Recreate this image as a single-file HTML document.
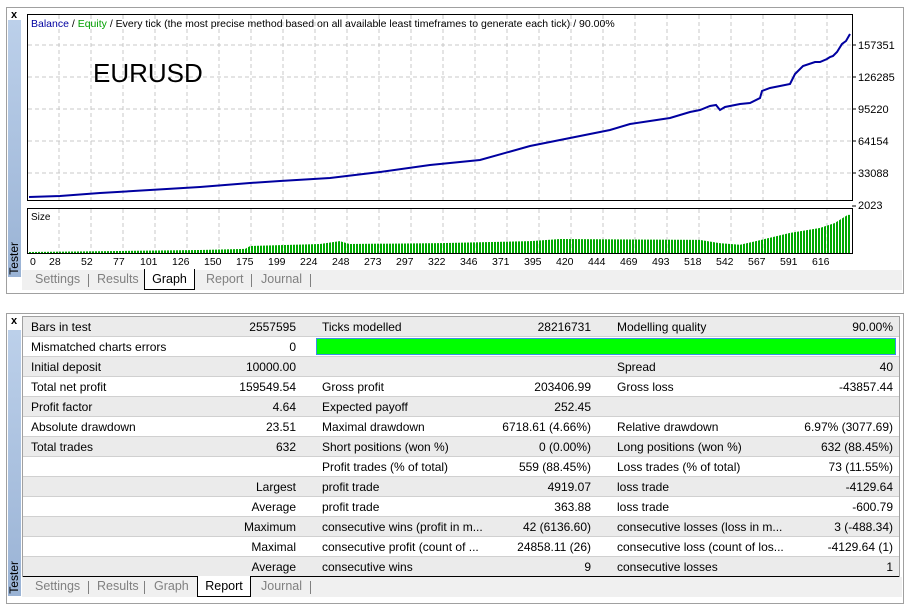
<!DOCTYPE html>
<html><head><meta charset="utf-8"><style>
*{margin:0;padding:0;box-sizing:border-box}
body{width:907px;height:610px;background:#fff;position:relative;overflow:hidden;font-family:"Liberation Sans",sans-serif;font-size:12px;color:#000}
.abs{position:absolute}
.panel{position:absolute;border:1px solid #a0a0a0;background:#f0f0f0}
.side{position:absolute;width:13px;background:linear-gradient(#bcd0ea,#9ab3d5)}
.side span{position:absolute;bottom:2px;left:-1px;writing-mode:vertical-rl;transform:rotate(180deg);font-size:12px;color:#000}
.x{position:absolute;font-size:11px;font-weight:bold}
.tabs{position:absolute;height:20px;font-size:12.5px;color:#808080}
.tabs span{position:absolute;top:2px}
.tabs i{position:absolute;top:4px;width:1px;height:13px;background:#808080}
.act{position:absolute;top:-1px;height:21px;background:#fff;border:1px solid #000;border-top:none;color:#000;text-align:center;padding-top:3px}
.row{position:absolute;left:23px;width:876px;height:20px;border-bottom:1px solid #d0d0d0}
.row span{position:absolute;top:3px;white-space:nowrap}
.r{text-align:right}
.ax{position:absolute;font-size:11px}
</style></head><body>
<div class="panel" style="left:6px;top:7px;width:898px;height:287px;background:#fff"></div>
<div class="abs" style="left:7px;top:8px;width:896px;height:285px;background:#fff"></div>
<div class="x" style="left:11px;top:9px">x</div>
<div class="side" style="left:8px;top:20px;height:257px"><span>Tester</span></div>
<svg class="abs" style="left:0;top:0" width="907" height="300">
<g stroke="#c8c8c8" stroke-dasharray="4,3" stroke-width="1">
<path d="M59 15V200M91 15V200M123 15V200M155 15V200M187 15V200M219 15V200M251 15V200M283 15V200M315 15V200M347 15V200M379 15V200M411 15V200M443 15V200M475 15V200M507 15V200M539 15V200M571 15V200M603 15V200M635 15V200M667 15V200M699 15V200M731 15V200M763 15V200M795 15V200M827 15V200"/>
<path d="M59 209V253M91 209V253M123 209V253M155 209V253M187 209V253M219 209V253M251 209V253M283 209V253M315 209V253M347 209V253M379 209V253M411 209V253M443 209V253M475 209V253M507 209V253M539 209V253M571 209V253M603 209V253M635 209V253M667 209V253M699 209V253M731 209V253M763 209V253M795 209V253M827 209V253"/>
<path d="M28 45H852M28 77H852M28 109H852M28 141H852M28 173H852"/>
</g>
<rect x="27.5" y="14.5" width="825" height="186" fill="none" stroke="#000"/>
<rect x="27.5" y="208.5" width="825" height="45" fill="none" stroke="#000"/>
<polyline fill="none" stroke="#0000a0" stroke-width="2" points="29,197 60,196 100,193 150,190 200,187 250,183 280,181 330,178 380,172 430,165 480,160 530,146 580,136 610,130 630,124 650,121 670,118 690,112 700,110 710,106 716,105 720,110 725,107 740,104 750,103 760,98 762,91 770,88 780,86 790,84 795,74 803,66 815,62 820,62 827,59 830,57 833,56 837,52 842,44 846,41 850,34"/>
<g stroke="#000"><path d="M852 45h4M852 77h4M852 109h4M852 141h4M852 173h4M852 206h4"/></g>
</svg>
<div class="abs" style="left:29px;top:212px;width:822px;height:41px;background:repeating-linear-gradient(90deg,#00a800 0 2px,transparent 2px 3px);clip-path:polygon(0 100%,0 97.5%,11% 95%,20.8% 92.7%,26.3% 90%,26.9% 83%,35.4% 78%,37.8% 71%,39% 78%,50% 76%,61% 71%,64.6% 66%,81.6% 68%,84% 76%,86.5% 80%,89.5% 66%,92.6% 51%,96.2% 39%,98% 27%,99.6% 7%,100% 7%,100% 100%)"></div>
<div class="abs" style="left:31px;top:212px;font-size:10px">Size</div>
<div class="abs" style="left:31px;top:18px;font-size:10.5px;white-space:nowrap"><span style="color:#0000a0">Balance</span> / <span style="color:#00a000">Equity</span> / Every tick (the most precise method based on all available least timeframes to generate each tick) / 90.00%</div>
<div class="abs" style="left:93px;top:58px;font-size:26px">EURUSD</div>
<div class="ax" style="left:858px;top:40px">157351</div>
<div class="ax" style="left:858px;top:72px">126285</div>
<div class="ax" style="left:858px;top:104px">95220</div>
<div class="ax" style="left:858px;top:136px">64154</div>
<div class="ax" style="left:858px;top:168px">33088</div>
<div class="ax" style="left:858px;top:200px">2023</div>
<div class="abs" style="left:0;top:256px;font-size:10.5px">
<span class="abs" style="left:30px">0</span><span class="abs" style="left:49px">28</span><span class="abs" style="left:81px">52</span><span class="abs" style="left:113px">77</span><span class="abs" style="left:140px">101</span><span class="abs" style="left:172px">126</span><span class="abs" style="left:204px">150</span><span class="abs" style="left:236px">175</span><span class="abs" style="left:268px">199</span><span class="abs" style="left:300px">224</span><span class="abs" style="left:332px">248</span><span class="abs" style="left:364px">273</span><span class="abs" style="left:396px">297</span><span class="abs" style="left:428px">322</span><span class="abs" style="left:460px">346</span><span class="abs" style="left:492px">371</span><span class="abs" style="left:524px">395</span><span class="abs" style="left:556px">420</span><span class="abs" style="left:588px">444</span><span class="abs" style="left:620px">469</span><span class="abs" style="left:652px">493</span><span class="abs" style="left:684px">518</span><span class="abs" style="left:716px">542</span><span class="abs" style="left:748px">567</span><span class="abs" style="left:780px">591</span><span class="abs" style="left:812px">616</span>
</div>
<div class="tabs" style="left:22px;top:270px;width:880px;background:#f0f0f0">
<span style="left:13px">Settings</span><i style="left:66px"></i><span style="left:75px">Results</span>
<div class="act" style="left:122px;width:51px">Graph</div>
<span style="left:184px">Report</span><i style="left:229px"></i><span style="left:239px">Journal</span><i style="left:288px"></i>
</div>
<div class="panel" style="left:6px;top:313px;width:898px;height:291px;background:#fff"></div>
<div class="x" style="left:11px;top:315px">x</div>
<div class="side" style="left:8px;top:330px;height:266px"><span>Tester</span></div>
<div class="abs" style="left:22px;top:316px;width:878px;height:262px;border:1px solid #a0a0a0;border-bottom:1px solid #000;background:#fff"></div>
<div class="row" style="top:317px;background:#ebebeb"><span style="left:8px">Bars in test</span><span class="r" style="right:603px">2557595</span><span style="left:299px">Ticks modelled</span><span class="r" style="right:308px">28216731</span><span style="left:594px">Modelling quality</span><span class="r" style="right:6px">90.00%</span></div>
<div class="row" style="top:337px;background:#fff"><span style="left:8px">Mismatched charts errors</span><span class="r" style="right:603px">0</span><div class="abs" style="left:293px;top:1px;width:580px;height:17px;background:#00ff00;border:1px solid #3a8ee6"></div></div>
<div class="row" style="top:357px;background:#ebebeb"><span style="left:8px">Initial deposit</span><span class="r" style="right:603px">10000.00</span><span style="left:594px">Spread</span><span class="r" style="right:6px">40</span></div>
<div class="row" style="top:377px;background:#fff"><span style="left:8px">Total net profit</span><span class="r" style="right:603px">159549.54</span><span style="left:299px">Gross profit</span><span class="r" style="right:308px">203406.99</span><span style="left:594px">Gross loss</span><span class="r" style="right:6px">-43857.44</span></div>
<div class="row" style="top:397px;background:#ebebeb"><span style="left:8px">Profit factor</span><span class="r" style="right:603px">4.64</span><span style="left:299px">Expected payoff</span><span class="r" style="right:308px">252.45</span></div>
<div class="row" style="top:417px;background:#fff"><span style="left:8px">Absolute drawdown</span><span class="r" style="right:603px">23.51</span><span style="left:299px">Maximal drawdown</span><span class="r" style="right:308px">6718.61 (4.66%)</span><span style="left:594px">Relative drawdown</span><span class="r" style="right:6px">6.97% (3077.69)</span></div>
<div class="row" style="top:437px;background:#ebebeb"><span style="left:8px">Total trades</span><span class="r" style="right:603px">632</span><span style="left:299px">Short positions (won %)</span><span class="r" style="right:308px">0 (0.00%)</span><span style="left:594px">Long positions (won %)</span><span class="r" style="right:6px">632 (88.45%)</span></div>
<div class="row" style="top:457px;background:#fff"><span style="left:299px">Profit trades (% of total)</span><span class="r" style="right:308px">559 (88.45%)</span><span style="left:594px">Loss trades (% of total)</span><span class="r" style="right:6px">73 (11.55%)</span></div>
<div class="row" style="top:477px;background:#ebebeb"><span class="r" style="right:603px">Largest</span><span style="left:299px">profit trade</span><span class="r" style="right:308px">4919.07</span><span style="left:594px">loss trade</span><span class="r" style="right:6px">-4129.64</span></div>
<div class="row" style="top:497px;background:#fff"><span class="r" style="right:603px">Average</span><span style="left:299px">profit trade</span><span class="r" style="right:308px">363.88</span><span style="left:594px">loss trade</span><span class="r" style="right:6px">-600.79</span></div>
<div class="row" style="top:517px;background:#ebebeb"><span class="r" style="right:603px">Maximum</span><span style="left:299px">consecutive wins (profit in m...</span><span class="r" style="right:308px">42 (6136.60)</span><span style="left:594px">consecutive losses (loss in m...</span><span class="r" style="right:6px">3 (-488.34)</span></div>
<div class="row" style="top:537px;background:#fff"><span class="r" style="right:603px">Maximal</span><span style="left:299px">consecutive profit (count of ...</span><span class="r" style="right:308px">24858.11 (26)</span><span style="left:594px">consecutive loss (count of los...</span><span class="r" style="right:6px">-4129.64 (1)</span></div>
<div class="row" style="top:557px;background:#ebebeb;border-bottom:1px solid #000"><span class="r" style="right:603px">Average</span><span style="left:299px">consecutive wins</span><span class="r" style="right:308px">9</span><span style="left:594px">consecutive losses</span><span class="r" style="right:6px">1</span></div>
<div class="tabs" style="left:22px;top:577px;width:880px;background:#f0f0f0">
<span style="left:13px">Settings</span><i style="left:66px"></i><span style="left:75px">Results</span><i style="left:122px"></i><span style="left:132px">Graph</span>
<div class="act" style="left:175px;width:54px">Report</div>
<span style="left:239px">Journal</span><i style="left:288px"></i>
</div>
</body></html>
